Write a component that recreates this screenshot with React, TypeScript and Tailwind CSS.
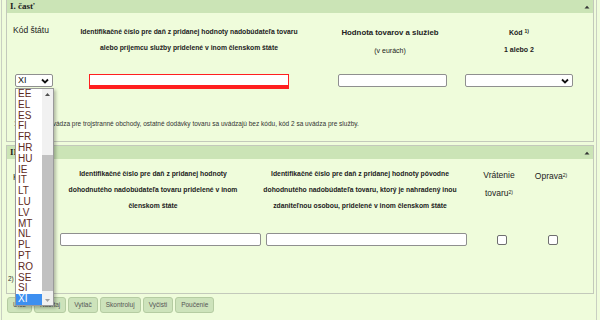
import React from 'react';

const countryCodes = [
  'EE', 'EL', 'ES', 'FI', 'FR', 'HR', 'HU', 'IE', 'IT', 'LT',
  'LU', 'LV', 'MT', 'NL', 'PL', 'PT', 'RO', 'SE', 'SI', 'XI',
];

const buttons = ['Ulož', 'Načítaj', 'Vytlač', 'Skontroluj', 'Vyčisti', 'Poučenie'];

const font = { fontFamily: '"Liberation Sans", Arial, sans-serif' };

const Chevron = () => (
  <svg width="8" height="6" viewBox="0 0 8 6" className="shrink-0">
    <path d="M1 1.5 L4 4.5 L7 1.5" fill="none" stroke="#111" strokeWidth="1.8" />
  </svg>
);

const CollapseArrow = () => (
  <svg width="6" height="4" viewBox="0 0 6 4">
    <path d="M0.5 3.5 L3 0.8 L5.5 3.5 Z" fill="#333" />
  </svg>
);

const PanelHeader = ({ title }: { title: string }) => (
  <div className="flex h-[13px] items-center justify-between bg-[#cbe4b6] pl-[3px] pr-[3px]">
    <span
      className="text-[9px] font-bold leading-none text-[#222]"
      style={{ fontFamily: '"Liberation Serif", "Times New Roman", serif' }}
    >
      {title}
    </span>
    <CollapseArrow />
  </div>
);

const TextInput = ({ className }: { className: string }) => (
  <div className={`h-[13px] rounded-[2px] border border-[#8f8f8f] bg-white ${className}`} />
);

const Checkbox = () => (
  <div className="h-[10px] w-[10px] rounded-[2px] border border-[#6f6f6f] bg-white" />
);

// otvorený zoznam kódov štátu
const CountryListbox = () => (
  <div className="absolute left-[15px] top-[88px] flex h-[218px] w-[39px] border border-[#9a9a9a] bg-white shadow-[2px_2px_3px_rgba(0,0,0,0.25)]">
    <div className="flex-1">
      {countryCodes.map((code) => (
        <div
          key={code}
          className={`h-[10.8px] pl-[2px] text-[10px] leading-[10.8px] ${
            code === 'XI' ? 'bg-[#3d8ff0] text-white' : 'text-[#5e2a22]'
          }`}
          style={font}
        >
          {code}
        </div>
      ))}
    </div>
    <div className="flex w-[11px] flex-col bg-[#f1f1f1]">
      <div className="flex h-[10px] items-center justify-center">
        <svg width="5" height="3" viewBox="0 0 5 3">
          <path d="M0 3 L2.5 0 L5 3 Z" fill="#505050" />
        </svg>
      </div>
      <div className="mt-[56px] h-[136px] bg-[#c1c1c1]" />
      <div className="mt-auto flex h-[10px] items-center justify-center">
        <svg width="5" height="3" viewBox="0 0 5 3">
          <path d="M0 0 L2.5 3 L5 0 Z" fill="#a0a0a0" />
        </svg>
      </div>
    </div>
  </div>
);

export default function App() {
  return (
    <div className="relative h-[320px] w-[600px] overflow-hidden bg-[#effcdb]" style={font}>
      <div className="ml-[1px] h-full w-[596px] border-x border-[#c9cfc2] pl-[4px] pr-[2px]">
        {/* I. časť */}
        <div className="h-[142px] border-x border-b border-[#c3c9bb]">
          <PanelHeader title="I. časť" />
          <div className="flex h-[50px] pt-[11px] text-[#222]">
            <div className="w-[68px] pl-[6px] pt-[1px] text-[8.5px] leading-[10px]">Kód štátu</div>
            <div className="w-[228px] text-center text-[6.8px] font-bold leading-[16px]">
              Identifikačné číslo pre daň z pridanej hodnoty nadobúdateľa tovaru
              <br />
              alebo príjemcu služby pridelené v inom členskom štáte
            </div>
            <div className="w-[174px] text-center text-[7.8px] leading-[18px]">
              <div className="font-bold">Hodnota tovarov a služieb</div>
              <div className="text-[7px]">(v eurách)</div>
            </div>
            <div className="w-[84px] text-center text-[7px] font-bold leading-[17px]">
              <div>
                Kód <sup className="text-[5px]">1)</sup>
              </div>
              <div>1 alebo 2</div>
            </div>
          </div>
          <div className="mt-[11px] flex items-start">
            <div className="ml-[8px] flex h-[13px] w-[38px] items-center justify-between rounded-[2px] border border-[#8f8f8f] bg-white pl-[2px] pr-[3px] text-[9px] text-[#111]">
              XI
              <Chevron />
            </div>
            <div className="ml-[36px] h-[15px] w-[200px] border border-b-[4px] border-[#ff1f1f] bg-white" />
            <TextInput className="ml-[49px] w-[109px]" />
            <div className="ml-[18px] flex h-[13px] w-[108px] items-center justify-end rounded-[2px] border border-[#8f8f8f] bg-white pr-[3px]">
              <Chevron />
            </div>
          </div>
          <div className="mt-[31px] pl-[7px] text-[6.5px] leading-[8px] text-[#333]">
            1) Kód 1 sa uvádza pre trojstranné obchody, ostatné dodávky tovaru sa uvádzajú bez kódu, kód 2 sa uvádza pre služby.
          </div>
        </div>

        {/* II. časť */}
        <div className="mt-[3px] h-[149px] border border-[#c3c9bb]">
          <PanelHeader title="II. časť" />
          <div className="flex h-[74px] pt-[7px] text-[#222]">
            <div className="w-[53px] pl-[6px] pt-[3px] text-[8.5px] leading-[16px]">Kód štátu</div>
            <div className="w-[186px] text-center text-[6.8px] font-bold leading-[16px]">
              Identifikačné číslo pre daň z pridanej hodnoty
              <br />
              dohodnutého nadobúdateľa tovaru pridelené v inom
              <br />
              členskom štáte
            </div>
            <div className="w-[228px] text-center text-[6.8px] font-bold leading-[16px]">
              Identifikačné číslo pre daň z pridanej hodnoty pôvodne
              <br />
              dohodnutého nadobúdateľa tovaru, ktorý je nahradený inou
              <br />
              zdaniteľnou osobou, pridelené v inom členskom štáte
            </div>
            <div className="w-[50px] text-center text-[8.5px] leading-[18px]">
              Vrátenie
              <br />
              tovaru<sup className="text-[5px]">2)</sup>
            </div>
            <div className="w-[54px] pt-[5px] text-center text-[8.5px] leading-[10px]">
              Oprava<sup className="text-[5px]">2)</sup>
            </div>
          </div>
          <div className="flex items-center">
            <TextInput className="ml-[53px] w-[201px]" />
            <TextInput className="ml-[5px] w-[201px]" />
            <div className="ml-[30px]">
              <Checkbox />
            </div>
            <div className="ml-[41px]">
              <Checkbox />
            </div>
          </div>
          <div className="mt-[29px] pl-[1px] text-[6.5px] leading-[8px] text-[#333]">2) Označí sa x.</div>
        </div>

        {/* tlačidlá */}
        <div className="mt-[3px] flex gap-[2px] pl-[1px]">
          {buttons.map((label) => (
            <div
              key={label}
              className="flex h-[16px] items-center rounded-[3px] border border-[#b5cca2] bg-[#cde3bb] px-[5px] text-[6.5px] text-[#555]"
            >
              {label}
            </div>
          ))}
        </div>
      </div>

      <CountryListbox />
    </div>
  );
}
